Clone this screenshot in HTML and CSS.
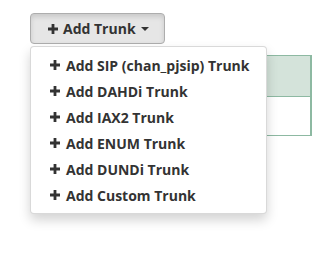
FILE: index.html
```html
<!DOCTYPE html>
<html lang="en">

<head>
    <meta charset="UTF-8">
    <meta name="viewport" content="width=device-width, initial-scale=1.0">
    <title>Trunks</title>
    <link rel="stylesheet" href="styles.css">
</head>

<body>
    <main class="page">
        <div class="btn-group">
            <button class="btn" id="add-trunk-btn">
                <svg class="icon-plus" viewBox="0 0 10 10"><path d="M3.6 0h2.8v3.6H10v2.8H6.4V10H3.6V6.4H0V3.6h3.6z"/></svg>
                Add Trunk
                <span class="caret"></span>
            </button>
            <ul class="dropdown-menu">
                <li><a href="#"><svg class="icon-plus" viewBox="0 0 10 10"><path d="M3.6 0h2.8v3.6H10v2.8H6.4V10H3.6V6.4H0V3.6h3.6z"/></svg>Add SIP (chan_pjsip) Trunk</a></li>
                <li><a href="#"><svg class="icon-plus" viewBox="0 0 10 10"><path d="M3.6 0h2.8v3.6H10v2.8H6.4V10H3.6V6.4H0V3.6h3.6z"/></svg>Add DAHDi Trunk</a></li>
                <li><a href="#"><svg class="icon-plus" viewBox="0 0 10 10"><path d="M3.6 0h2.8v3.6H10v2.8H6.4V10H3.6V6.4H0V3.6h3.6z"/></svg>Add IAX2 Trunk</a></li>
                <li><a href="#"><svg class="icon-plus" viewBox="0 0 10 10"><path d="M3.6 0h2.8v3.6H10v2.8H6.4V10H3.6V6.4H0V3.6h3.6z"/></svg>Add ENUM Trunk</a></li>
                <li><a href="#"><svg class="icon-plus" viewBox="0 0 10 10"><path d="M3.6 0h2.8v3.6H10v2.8H6.4V10H3.6V6.4H0V3.6h3.6z"/></svg>Add DUNDi Trunk</a></li>
                <li><a href="#"><svg class="icon-plus" viewBox="0 0 10 10"><path d="M3.6 0h2.8v3.6H10v2.8H6.4V10H3.6V6.4H0V3.6h3.6z"/></svg>Add Custom Trunk</a></li>
            </ul>
        </div>

        <table class="trunk-table">
            <thead>
                <tr><th class="col-name"></th><th></th></tr>
            </thead>
            <tbody>
                <tr><td class="col-name"></td><td></td></tr>
            </tbody>
        </table>
    </main>
</body>

</html>
```

FILE: styles.css
```css
body {
    font-family: "Open Sans", Arial, sans-serif;
    margin: 0;
    padding: 0;
    background-color: #fff;
    color: #333;
    font-size: 14px;
}

.page {
    box-sizing: border-box;
    min-height: 273px;
    padding: 13px 0 0 30px;
}

.btn-group {
    position: relative;
    z-index: 10;
    display: inline-block;
    vertical-align: top;
}

.btn {
    display: flex;
    align-items: center;
    height: 31px;
    padding: 0 15px 0 17px;
    font-family: inherit;
    font-size: 14px;
    font-weight: 700;
    color: #333;
    background-color: #e6e6e6;
    border: 1px solid #adadad;
    border-radius: 4px;
    box-shadow: inset 0 3px 5px rgba(0, 0, 0, 0.125);
    cursor: pointer;
}

.btn .icon-plus {
    margin-right: 5px;
}

.icon-plus {
    width: 10px;
    height: 10px;
    fill: #333;
    flex-shrink: 0;
}

.caret {
    display: inline-block;
    width: 0;
    height: 0;
    margin-left: 5px;
    border-top: 4px solid #333;
    border-left: 4px solid transparent;
    border-right: 4px solid transparent;
}

.dropdown-menu {
    position: absolute;
    top: 100%;
    left: 0;
    z-index: 10;
    width: 237px;
    box-sizing: border-box;
    margin: 2px 0 0;
    padding: 5px 0;
    list-style: none;
    background-color: #fff;
    border: 1px solid rgba(0, 0, 0, 0.15);
    border-radius: 4px;
    box-shadow: 0 6px 12px rgba(0, 0, 0, 0.175);
}

.dropdown-menu a {
    display: flex;
    align-items: center;
    height: 26px;
    padding: 0 20px 0 19px;
    color: #333;
    font-weight: 700;
    text-decoration: none;
    white-space: nowrap;
}

.dropdown-menu .icon-plus {
    margin-right: 6px;
}

.trunk-table {
    width: 100%;
    margin-top: 11px;
    border-collapse: collapse;
}

.trunk-table th,
.trunk-table td {
    padding: 0;
    border: 1px solid #8db9a2;
}

.trunk-table th {
    height: 40px;
    background-color: #d4e3da;
}

.trunk-table td {
    height: 38px;
    background-color: #fff;
}

.trunk-table .col-name {
    width: 280px;
}
```
